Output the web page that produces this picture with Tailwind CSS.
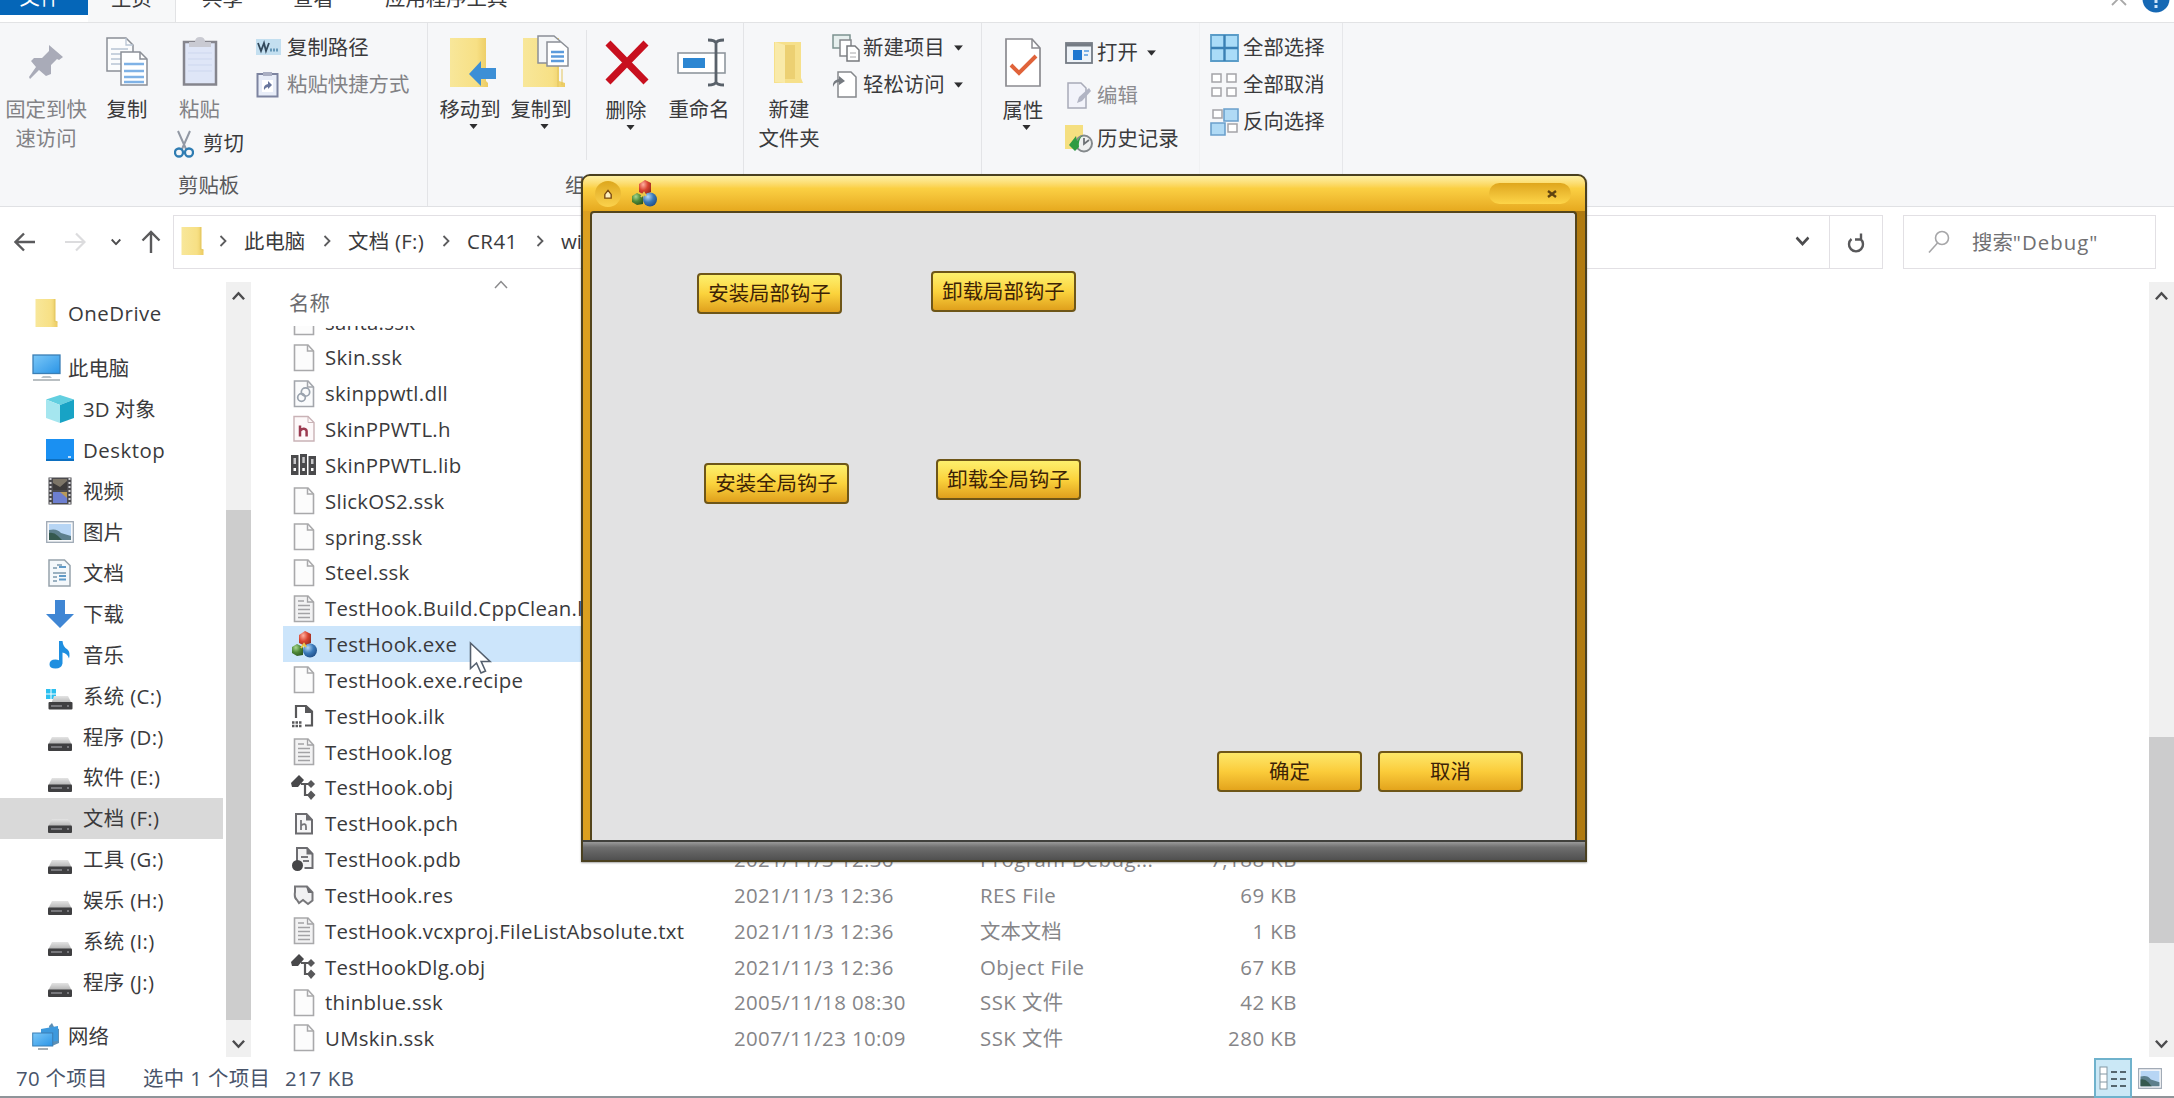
<!DOCTYPE html>
<html lang="zh-CN">
<head>
<meta charset="utf-8">
<title>Debug</title>
<script src="https://cdn.jsdelivr.net/npm/@tailwindcss/browser@4"></script>
</head>
<body class="relative flex h-[1098px] w-[2174px] flex-col overflow-hidden bg-white font-['Open_Sans','Noto_Sans_CJK_SC',sans-serif] text-[20.4px] text-[#3a3a3c]">

<!-- shared symbols -->
<svg class="absolute h-0 w-0">
  <defs>
    <radialGradient id="red" cx=".35" cy=".3" r=".8"><stop offset="0" stop-color="#ffb0a0"/><stop offset=".5" stop-color="#d8432f"/><stop offset="1" stop-color="#8c2a20"/></radialGradient>
    <radialGradient id="grn" cx=".35" cy=".3" r=".8"><stop offset="0" stop-color="#a8d890"/><stop offset=".5" stop-color="#4f8a38"/><stop offset="1" stop-color="#2c5520"/></radialGradient>
    <radialGradient id="blu" cx=".35" cy=".3" r=".8"><stop offset="0" stop-color="#b4d8f8"/><stop offset=".5" stop-color="#3a78b8"/><stop offset="1" stop-color="#1d4880"/></radialGradient>
    <linearGradient id="fold" x1="0" x2="1"><stop offset="0" stop-color="#f8e79a"/><stop offset=".7" stop-color="#f7e085"/><stop offset="1" stop-color="#eccb62"/></linearGradient>
    <linearGradient id="scr" x1="0" y1="0" x2="1" y2="1"><stop offset="0" stop-color="#7cc8f8"/><stop offset="1" stop-color="#2a94e6"/></linearGradient>
    <linearGradient id="drv" x1="0" y1="0" x2="0" y2="1"><stop offset="0" stop-color="#e4e4e4"/><stop offset="1" stop-color="#b4b4b4"/></linearGradient>
  </defs>
  <symbol id="mfc" viewBox="0 0 26 27"><path d="M1 16l5-3 6 3v8l-6 1-5-3z" fill="url(#grn)"/><path d="M8 4l6-4 6 3v9l-6 3-6-3z" fill="url(#red)"/><circle cx="19" cy="19.500" r="7" fill="url(#blu)"/><path d="M10 17l3-4 2 3" stroke="#e8c84c" stroke-width="2" fill="none"/></symbol>
  <symbol id="page" viewBox="0 0 22 28"><path d="M1.500 1h13.500l5.500 6v19.500h-19z" fill="#fcfcfc" stroke="#a9a9ab" stroke-width="1.600"/><path d="M14.500 1v6h6" fill="none" stroke="#a9a9ab" stroke-width="1.500"/></symbol>
  <symbol id="txt" viewBox="0 0 22 28"><path d="M1.500 1h13.500l5.500 6v19.500h-19z" fill="#f2f2f3" stroke="#a9a9ab" stroke-width="1.600"/><path d="M14.500 1v6h6M5 6h6M5 10.500h12M5 14.500h12M5 18.500h12M5 22.500h12" fill="none" stroke="#a2a2a5" stroke-width="1.300"/></symbol>
  <symbol id="dll" viewBox="0 0 22 28"><path d="M1.500 1h13.500l5.500 6v19.500h-19z" fill="#fafbfc" stroke="#a3a6ac" stroke-width="1.600"/><path d="M14.500 1v6h6" fill="none" stroke="#a3a6ac" stroke-width="1.500"/><circle cx="12.500" cy="12" r="4.200" fill="none" stroke="#9aa3ae" stroke-width="1.700"/><circle cx="8.500" cy="17.500" r="3.800" fill="none" stroke="#9aa3ae" stroke-width="1.700"/></symbol>
  <symbol id="h" viewBox="0 0 24 28"><path d="M2 1.500h14l6 6v18.500h-20z" fill="#fdf8f9" stroke="#c9b2b6" stroke-width="1.400"/><path d="M16 1.500v6h6" fill="none" stroke="#c9b2b6"/><path d="M8 10.500v11M8 16q1.500-2.500 4-2.200t2.600 2.500v5.200" fill="none" stroke="#9c3a50" stroke-width="2.500"/></symbol>
  <symbol id="lib" viewBox="0 0 26 22"><path d="M0 1h7.500v20h-7.500zM9 0h7v21h-7zM17.500 2h7.500v19h-7.500z" fill="#4a4a4c"/><path d="M2.500 4h2.500v6h-2.500zM11.300 3h2.500v6h-2.500zM20 5h2.500v5h-2.500z" fill="#c8c8ca"/><path d="M2.500 14h2.500v3h-2.500zM11.300 14h2.500v3h-2.500zM20 14h2.500v3h-2.500z" fill="#fff"/></symbol>
  <symbol id="ilk" viewBox="0 0 24 24"><path d="M4 14v-12h10l6 5.500v14h-7" fill="none" stroke="#58585a" stroke-width="2.200"/><path d="M13 1l8 8h-8z" fill="#58585a"/><path d="M0 18.500h10M0 22h10" stroke="#58585a" stroke-width="2.500" stroke-dasharray="2.500 1"/></symbol>
  <symbol id="obj" viewBox="0 0 26 26"><path d="M0 8l8-8 5 5-6 7h-6z" fill="#48484a"/><path d="M10 9h8M14 9v11h5" fill="none" stroke="#58585a" stroke-width="2.200"/><path d="M16 9l4-4 4 4-4 4zM16 20l4-4.500 4.500 4.500-4.500 5z" fill="#58585a"/></symbol>
  <symbol id="pch" viewBox="0 0 20 24"><path d="M2 2h10.500l5.500 6v13.500h-16z" fill="#f6f6f7" stroke="#6c6c70" stroke-width="2"/><path d="M12 2v6.500h6z" fill="#6c6c70"/><path d="M7 8v10M7 13.500q5-3 5 1v3.500" stroke="#77777b" stroke-width="1.800" fill="none"/></symbol>
  <symbol id="pdb" viewBox="0 0 24 26"><path d="M5 16v-14h10l5.500 6v14h-8" fill="#f2f2f3" stroke="#6c6c70" stroke-width="2"/><path d="M14.500 2v6.500h6z" fill="#6c6c70"/><path d="M9 11h7M11 15h6" stroke="#77777b" stroke-width="2"/><circle cx="5.500" cy="19.500" r="5.500" fill="#454547"/></symbol>
  <symbol id="res" viewBox="0 0 22 22"><path d="M4 16q-3-2-2-8v-5.500h12l5.500 6v8l-4.500 3.500-5-4-4 3z" fill="#f1f1f2" stroke="#77777a" stroke-width="2"/><path d="M13 2l7 7h-5z" fill="#6c6c70"/></symbol>
  <symbol id="folder" viewBox="0 0 22 30"><path d="M0 1h20v22l2 1v5h-22z" fill="url(#fold)"/><path d="M19 1v22l3 1" fill="none" stroke="#e6cb67" stroke-width="1.300"/></symbol>
  <symbol id="pc" viewBox="0 0 29 28"><rect x="1" y="1" width="27" height="18.500" fill="url(#scr)" stroke="#3b7fb5" stroke-width="1.300"/><path d="M11 22h7l2 2h-11z" fill="#b8c2c8"/><path d="M1 26h27" stroke="#b2b8bc" stroke-width="1.800"/></symbol>
  <symbol id="cube" viewBox="0 0 28 28"><path d="M14 0l14 4.500-14 5.500-14-5.500z" fill="#62cfe0"/><path d="M0 4.500l14 5.500v18l-14-5z" fill="#a5e6ef"/><path d="M28 4.500l-14 5.500v18l14-5z" fill="#18a3c5"/></symbol>
  <symbol id="desk" viewBox="0 0 28 28"><rect y="3" width="28" height="22" fill="#1a90f2"/><path d="M0 24h28" stroke="#0c6fc0" stroke-width="2"/><path d="M22 21h3" stroke="#bfe1ff" stroke-width="2"/></symbol>
  <symbol id="film" viewBox="0 0 24 28"><rect x=".5" y=".5" width="23" height="27" fill="#4b4a4e"/><rect x="5" y="2" width="14" height="11" fill="#7c7568"/><rect x="5" y="15" width="14" height="11" fill="#6d7fd0"/><path d="M5 6l7 4 7-6v9h-14z" fill="#3c3a3a"/><path d="M12 15h7v6z" fill="#b89a5a"/><path d="M2.500 1v26M21.500 1v26" stroke="#d0d0d4" stroke-width="2" stroke-dasharray="2 2"/></symbol>
  <symbol id="pic" viewBox="0 0 28 22"><rect x=".7" y=".7" width="26.600" height="20.600" fill="#f8f9fb" stroke="#9ea8b4" stroke-width="1.300"/><rect x="3" y="3" width="22" height="16" fill="#b7d5f4"/><path d="M3 9q8-2 12 3l10 3v4h-22z" fill="#5d7f8c"/><path d="M3 12q5-1 9 3l4 4h-13z" fill="#35594e"/></symbol>
  <symbol id="docu" viewBox="0 0 23 28"><path d="M1 1h15.500l5.500 5.500v20.500h-21z" fill="#f4f8fb" stroke="#96a2ac" stroke-width="1.500"/><path d="M9 6h5M5 9h4M5 14h13M5 18h4M5 22h4" stroke="#7b98ad" stroke-width="1.600"/><path d="M11 8h7M11 17h7M11 20.500h7" stroke="#5f9ac8" stroke-width="2"/></symbol>
  <symbol id="down" viewBox="0 0 28 28"><path d="M9 0h10v14h9l-14 14-14-14h9z" fill="#3f86d4"/></symbol>
  <symbol id="note" viewBox="0 0 22 28"><path d="M10 0h3.500q.5 6 5 8.500 3 2.500 1.500 9-1.500-5-6.500-6v11q-1 5-7 5-6 0-6-4.300 0-4.700 6-4.700 2 0 3.500.8z" fill="#1f8fe0"/></symbol>
  <symbol id="drive" viewBox="0 0 24 14"><path d="M4 0h16l3.500 7h-23z" fill="url(#drv)"/><rect x="0" y="6.500" width="24" height="7.500" rx="1" fill="#3f3f41"/><path d="M3 10h11M19 10h2" stroke="#8b8b8e" stroke-width="1.500"/></symbol>
  <symbol id="sys" viewBox="0 0 28 22"><path d="M0 1h4.500v4.500h-4.500zM5.500 1h4.500v4.500h-4.500zM0 6.500h4.500v4.500h-4.500zM5.500 6.500h4.500v4.500h-4.500z" fill="#2cc0f0"/><path d="M8 8h14l3.500 7h-20z" fill="url(#drv)"/><rect x="2.500" y="14" width="24" height="7.500" rx="1" fill="#3f3f41"/><path d="M5 18h11M21 18h2" stroke="#8b8b8e" stroke-width="1.500"/></symbol>
  <symbol id="net" viewBox="0 0 28 27"><path d="M17 3l3-3 2 4 5 2v14l-7 3z" fill="#5d8fb4"/><path d="M9 6l17-3v15l-17 2z" fill="#3d99dd"/><rect x=".7" y="10" width="20" height="13" fill="url(#scr)" stroke="#3b7fb5"/><path d="M6 26h10" stroke="#a5adb3" stroke-width="2"/></symbol>
  <symbol id="caret" viewBox="0 0 10 6"><path d="M0 0h10l-5 6z" fill="#2e2e30"/></symbol>
  <symbol id="gt" viewBox="0 0 8 12"><path d="M1.500 1l5 5-5 5" fill="none" stroke="#5c5c5e" stroke-width="1.800"/></symbol>
  <symbol id="vee" viewBox="0 0 14 10"><path d="M1 1.500l6 6.500 6-6.500" fill="none" stroke="#4c4c4e" stroke-width="2.600"/></symbol>
</svg>

<!-- tabs -->
<header class="flex h-[23px] shrink-0 items-start overflow-hidden border-b border-[#e2e3e5] bg-white leading-[30px]">
  <div class="flex h-[15px] w-[88px] justify-center bg-[#0566b8] text-white"><span class="-mt-[18px] ml-[-8px]">文件</span></div>
  <div class="flex h-[23px] w-[88px] justify-center border-r border-[#e2e3e5] bg-[#f7f8f9]"><span class="-mt-[17px]">主页</span></div>
  <span class="-mt-[17px] ml-[26px] w-[91px]">共享</span>
  <span class="-mt-[17px] w-[92px]">查看</span>
  <span class="-mt-[17px] grow">应用程序工具</span>
  <svg class="mr-[15px] h-[6px] w-[16px]" viewBox="0 0 16 6"><path d="M1 5l7-7 7 7" fill="none" stroke="#a8a8a8" stroke-width="1.800"/></svg>
  <svg class="mr-[4px] h-[14px] w-[28px]" viewBox="0 0 28 14"><circle cx="14" cy="-1" r="13.500" fill="#1668b4"/><path d="M14 0v3M14 5v3" stroke="#cfe5fa" stroke-width="3"/></svg>
</header>

<!-- ribbon -->
<section class="flex h-[184px] shrink-0 border-b border-[#e0e1e4] bg-[#f6f7f9]">
  <!-- clipboard -->
  <div class="flex w-[427px] flex-col">
    <div class="flex h-[148px]">
      <div class="flex w-[92px] flex-col items-center pt-[14px] leading-[29px] text-[#828286]">
        <svg class="h-[50px] w-[36px]" viewBox="0 0 36 50"><path d="M21 8l14 12-4 3-2-1-6 6v9l-5 2-7-6-9 9-1-2 7-10-5-6 3-3h8l7-7z" fill="#a9abb8"/></svg>
        <span class="mt-[8px]">固定到快</span><span>速访问</span>
      </div>
      <div class="flex w-[70px] flex-col items-center pt-[14px] leading-[29px]">
        <svg class="h-[50px] w-[42px]" viewBox="0 0 42 50"><path d="M1 1h19l7 7v26h-26z" fill="#fbfcfd" stroke="#8b8f96" stroke-width="1.500"/><path d="M20 1v7h7M5 12h17M5 17h17M5 22h17M5 27h10" fill="none" stroke="#b8c4d4" stroke-width="1.300"/><path d="M15 15h19l7 7v26h-26z" fill="#fff" stroke="#8b8f96" stroke-width="1.500"/><path d="M34 15v7h7" fill="none" stroke="#8b8f96" stroke-width="1.500"/><path d="M18 27h20M18 34h20M18 40h20M18 45h20" stroke="#7fb2e6" stroke-width="2.600"/></svg>
        <span class="mt-[8px]">复制</span>
      </div>
      <div class="flex w-[94px] flex-col pt-[14px] leading-[29px]">
        <svg class="ml-[20px] h-[50px] w-[36px]" viewBox="0 0 36 50"><rect x="2" y="5" width="32" height="42.500" fill="#dfe6f7" stroke="#85858d" stroke-width="2.500"/><path d="M7 5h22v5h-22z" fill="#c9cad2"/><path d="M13 5q0-5 5-5t5 5" fill="#c9cad2"/><path d="M6 16h24M6 22h24M6 28h24M6 34h24" stroke="#cdd7ee"/></svg>
        <span class="mt-[8px] ml-[17px] text-[#828286]">粘贴</span>
        <div class="mt-[5px] ml-[12px] flex items-center gap-[9px]">
          <svg class="h-[28px] w-[20px]" viewBox="0 0 20 28"><path d="M4 1l8 18M16 1l-8 18" stroke="#9298a4" stroke-width="2"/><circle cx="5" cy="22.500" r="4" fill="none" stroke="#2f7cb2" stroke-width="2.300"/><circle cx="15" cy="22.500" r="4" fill="none" stroke="#2f7cb2" stroke-width="2.300"/></svg>
          <span>剪切</span>
        </div>
      </div>
      <div class="flex flex-col pt-[6px]">
        <div class="flex h-[37px] items-center">
          <svg class="mr-[6px] h-[17px] w-[25px]" viewBox="0 0 25 17"><rect width="25" height="16" fill="#c3dff0"/><path d="M2 4l3 8 3-8 2 8 3-8" fill="none" stroke="#33495c" stroke-width="1.800"/><path d="M14 11h9" stroke="#6698b8" stroke-width="3" stroke-dasharray="2 1"/></svg>复制路径
        </div>
        <div class="flex h-[37px] items-center text-[#828286]">
          <svg class="mr-[8px] h-[27px] w-[23px]" viewBox="0 0 23 27"><rect x="1.500" y="3" width="20" height="22.500" fill="#e8edf8" stroke="#7d84a0" stroke-width="2"/><path d="M7 1h9v4h-9z" fill="#a9aec2"/><rect x="6" y="9" width="11" height="12" fill="#fff"/><path d="M8 19q-1-5 4-6v-3l4 4-4 4v-2q-2 0-4 3z" fill="#67759c"/></svg>粘贴快捷方式
        </div>
      </div>
    </div>
    <span class="ml-[178px] leading-[29px] text-[#5a5a5c]">剪贴板</span>
  </div>
  <!-- organize -->
  <div class="flex w-[316px] flex-col border-l border-[#e3e4e7]">
    <div class="flex h-[148px]">
      <div class="ml-[6px] flex w-[72px] flex-col items-center pt-[14px] leading-[29px]">
        <svg class="ml-[6px] h-[50px] w-[46px]" viewBox="0 0 46 50"><path d="M0 1h36v43l2 2v4h-38z" fill="url(#fold)"/><path d="M19 37l12-13v7h15v11h-15v7z" fill="#3c8fd6"/></svg>
        <span class="mt-[8px]">移动到</span>
        <svg class="ml-[7px] h-[5px] w-[9px]" viewBox="0 0 10 6"><use href="#caret"/></svg>
      </div>
      <div class="flex w-[70px] flex-col items-center pt-[14px] leading-[29px]">
        <svg class="ml-[10px] h-[50px] w-[46px] overflow-visible" viewBox="0 0 46 50"><path d="M0 1h36v43l6 2v4h-42z" fill="url(#fold)"/><path d="M35 20v30M39 32v16" stroke="#e3c55c"/><path d="M15-1h16l6 5v22h-22z" fill="#f4f6f8" stroke="#8b8f96" stroke-width="1.500"/><path d="M24 5h14l7 6v18h-21z" fill="#fff" stroke="#8b8f96" stroke-width="1.500"/><path d="M28 15h13M28 19.500h13M28 24h13" stroke="#5b9bdc" stroke-width="2.300"/></svg>
        <span class="mt-[8px]">复制到</span>
        <svg class="ml-[6px] h-[5px] w-[9px]" viewBox="0 0 10 6"><use href="#caret"/></svg>
      </div>
      <div class="mt-[7px] ml-[10px] h-[130px] w-px bg-[#e3e4e7]"></div>
      <div class="ml-[4px] flex w-[70px] flex-col items-center pt-[15px] leading-[29px]">
        <svg class="ml-[2px] h-[50px] w-[44px]" viewBox="0 0 44 50"><path d="M3 5l38 39M41 5l-38 39" stroke="#c8101f" stroke-width="7"/></svg>
        <span class="mt-[8px]">删除</span>
        <svg class="ml-[8px] h-[5px] w-[9px]" viewBox="0 0 10 6"><use href="#caret"/></svg>
      </div>
      <div class="ml-[2px] flex w-[72px] flex-col items-center pt-[14px] leading-[29px]">
        <svg class="ml-[5px] h-[50px] w-[50px]" viewBox="0 0 50 50"><rect x="1" y="16" width="47" height="20" fill="#fff" stroke="#8f969e" stroke-width="1.600"/><rect x="6" y="21" width="22" height="10" fill="#2c86d2"/><path d="M31 3q7 0 8 3 1-3 8-3M39 5v40M31 48q7 0 8-3 1 3 8 3" fill="none" stroke="#59616a" stroke-width="2.800"/></svg>
        <span class="mt-[8px]">重命名</span>
      </div>
    </div>
    <span class="ml-[137px] leading-[29px] text-[#5a5a5c]">组织</span>
  </div>
  <!-- new -->
  <div class="flex w-[238px] border-l border-[#e3e4e7]">
    <div class="ml-[9px] flex w-[72px] flex-col items-center pt-[14px] leading-[29px]">
      <svg class="ml-[-2px] h-[50px] w-[30px]" viewBox="0 0 30 50"><path d="M1 5h27v36l2 5h-29z" fill="#f6e08b"/><path d="M2 5l10 3v38l-10-1z" fill="#f9eaa9"/><path d="M12 8h10v34h-10z" fill="#ecd072"/></svg>
      <span class="mt-[8px]">新建</span><span>文件夹</span>
    </div>
    <div class="ml-[7px] flex flex-col pt-[6px]">
      <div class="flex h-[37px] items-center">
        <svg class="mr-[3px] h-[28px] w-[28px]" viewBox="0 0 28 28"><path d="M1 1h17v13h-17z" fill="#e6efee" stroke="#7c9390" stroke-width="1.500"/><path d="M8 6h11v16h-11z" fill="#fff" stroke="#85888c" stroke-width="1.500"/><path d="M15 12h8l4 4v11h-12z" fill="#fff" stroke="#77797d" stroke-width="1.500"/><path d="M18 19h6M18 23h6" stroke="#a8a8aa"/></svg>新建项目<svg class="ml-[9px] h-[6px] w-[9px]" viewBox="0 0 10 6"><use href="#caret"/></svg>
      </div>
      <div class="flex h-[37px] items-center">
        <svg class="mr-[3px] h-[28px] w-[28px]" viewBox="0 0 28 28"><path d="M6 1h13l5 5v20h-18z" fill="#fff" stroke="#85888c" stroke-width="1.500"/><path d="M1 16q-1-7 6-8v-3l6 5-6 4v-3q-4 0-6 5z" fill="#757a80"/></svg>轻松访问<svg class="ml-[9px] h-[6px] w-[9px]" viewBox="0 0 10 6"><use href="#caret"/></svg>
      </div>
    </div>
  </div>
  <!-- open -->
  <div class="flex w-[218px] border-l border-[#e3e4e7]">
    <div class="ml-[5px] flex w-[72px] flex-col items-center pt-[15px] leading-[29px]">
      <svg class="h-[50px] w-[36px]" viewBox="0 0 36 50"><path d="M1 1h26l8 9v38h-34z" fill="#fff" stroke="#8b8b90" stroke-width="1.700"/><path d="M27 1v9h8" fill="none" stroke="#8b8b90" stroke-width="1.500"/><path d="M6 27l8 8 17-17" fill="none" stroke="#e0633a" stroke-width="4"/></svg>
      <span class="mt-[8px]">属性</span>
      <svg class="ml-[6px] h-[5px] w-[9px]" viewBox="0 0 10 6"><use href="#caret"/></svg>
    </div>
    <div class="ml-[6px] flex flex-col pt-[8px]">
      <div class="flex h-[43px] items-center">
        <svg class="mr-[4px] h-[22px] w-[28px]" viewBox="0 0 28 22"><rect x="1" y="1" width="26" height="20" fill="#eef3f8" stroke="#747b84" stroke-width="1.800"/><path d="M1 3h26" stroke="#747b84" stroke-width="3"/><rect x="8" y="8" width="9" height="10" fill="#1f77d0"/><path d="M19 9h5M19 13h4" stroke="#7ab0e6" stroke-width="2"/></svg>打开<svg class="ml-[9px] h-[6px] w-[9px]" viewBox="0 0 10 6"><use href="#caret"/></svg>
      </div>
      <div class="flex h-[43px] items-center text-[#8c8c90]">
        <svg class="mr-[4px] h-[28px] w-[28px]" viewBox="0 0 28 28"><path d="M3 1h13l5 5v20h-18z" fill="#f2f3fa" stroke="#a8abb8" stroke-width="1.500"/><path d="M12 21l2-6 10-9 2 3-9 10z" fill="#b1b4c3"/></svg>编辑
      </div>
      <div class="flex h-[43px] items-center">
        <svg class="mr-[4px] h-[30px] w-[28px]" viewBox="0 0 28 30"><path d="M0 1h18v24h-18z" fill="#f5df80"/><circle cx="19" cy="19.500" r="8" fill="#eef0f0" stroke="#84898c" stroke-width="2"/><path d="M19 14v6l5-4" fill="none" stroke="#6c7174" stroke-width="1.800"/><path d="M4 21l7-9 1 5q3-4 6-6-5 5-4 12l-4 4z" fill="#2f9c42"/></svg>历史记录
      </div>
    </div>
  </div>
  <!-- select -->
  <div class="flex w-[144px] flex-col border-r border-l border-[#e6e7ea] border-l-[#f0f1f3] pt-[6px] pl-[10px]">
    <div class="flex h-[37px] items-center">
      <svg class="mr-[4px] h-[28px] w-[29px]" viewBox="0 0 29 28"><path d="M1 1h27v26h-27z" fill="#aadcf8" stroke="#5a9cc8" stroke-width="1.800"/><path d="M14.500 1v26M1 14h27" stroke="#3a80b4" stroke-width="2.400"/></svg>全部选择
    </div>
    <div class="flex h-[37px] items-center">
      <svg class="mr-[4px] h-[28px] w-[29px]" viewBox="0 0 29 28"><path d="M2 3h9v8h-9zM17 3h9v8h-9zM2 17h9v8h-9zM17 17h9v8h-9z" fill="#fff" stroke="#a4a4a8" stroke-width="1.500"/></svg>全部取消
    </div>
    <div class="flex h-[37px] items-center">
      <svg class="mr-[4px] h-[28px] w-[29px]" viewBox="0 0 29 28"><path d="M3 2h9v8h-9zM18 16h9v8h-9z" fill="#fff" stroke="#a4a4a8" stroke-width="1.500"/><path d="M14 1h14v12h-14zM1 15h14v12h-14z" fill="#b0daf5" stroke="#6ba0cc" stroke-width="1.600"/></svg>反向选择
    </div>
  </div>
</section>

<!-- address bar -->
<nav class="flex h-[63px] shrink-0 items-start pt-[8px]">
  <div class="flex h-[54px] w-[173px] items-center">
    <svg class="ml-[14px] h-[22px] w-[22px]" viewBox="0 0 22 22"><path d="M21 11h-19M10 2.500l-8.500 8.500 8.500 8.500" fill="none" stroke="#5a5a5c" stroke-width="2.400"/></svg>
    <svg class="ml-[28px] h-[22px] w-[22px]" viewBox="0 0 22 22"><path d="M1 11h19M12 2.500l8.500 8.500-8.500 8.500" fill="none" stroke="#dcdcde" stroke-width="2.200"/></svg>
    <svg class="ml-[25px] h-[8px] w-[10px]" viewBox="0 0 14 10"><use href="#vee"/></svg>
    <svg class="ml-[20px] h-[24px] w-[20px]" viewBox="0 0 20 24"><path d="M10 23v-21M1.500 10.500l8.500-8.500 8.500 8.500" fill="none" stroke="#5a5a5c" stroke-width="2.400"/></svg>
  </div>
  <div class="flex h-[54px] w-[1710px] items-center border border-[#e2e0e4] pb-[2px]">
    <svg class="ml-[7px] h-[30px] w-[23px]"><use href="#folder"/></svg>
    <svg class="ml-[15px] h-[12px] w-[8px]"><use href="#gt"/></svg>
    <span class="ml-[17px] w-[79px]">此电脑</span>
    <svg class="h-[12px] w-[8px]"><use href="#gt"/></svg>
    <span class="ml-[17px] w-[94px] whitespace-nowrap tracking-[0.3px]">文档 (F:)</span>
    <svg class="h-[12px] w-[8px]"><use href="#gt"/></svg>
    <span class="ml-[17px] w-[69px] tracking-[0.5px]">CR41</span>
    <svg class="h-[12px] w-[8px]"><use href="#gt"/></svg>
    <span class="ml-[17px] grow">win32</span>
    <svg class="mr-[19px] h-[10px] w-[15px]" viewBox="0 0 14 10"><use href="#vee"/></svg>
    <div class="-mb-[2px] flex h-[52px] w-[53px] items-center justify-center border-l border-[#e2e0e4]">
      <svg class="h-[22px] w-[18px]" viewBox="0 0 18 22"><path d="M13.500 7a7 7 0 1 1-9 0M4 1.500v6h6" fill="none" stroke="#58585a" stroke-width="2.400" transform="matrix(-1 0 0 1 18 1)"/></svg>
    </div>
  </div>
  <div class="ml-[20px] flex h-[54px] w-[253px] items-center border border-[#e2e0e4] text-[#707072]">
    <svg class="ml-[24px] h-[24px] w-[22px]" viewBox="0 0 22 24"><circle cx="14" cy="8" r="6.500" fill="none" stroke="#a6a6a8" stroke-width="1.600"/><path d="M9.500 13l-8.500 9.500" stroke="#a6a6a8" stroke-width="1.600"/></svg>
    <span class="ml-[22px]">搜索<span class="tracking-[1px]">"Debug"</span></span>
  </div>
</nav>

<!-- panes -->
<main class="flex h-[790px] shrink-0">
  <aside class="flex h-full w-[226px] flex-col pt-[23px]" id="tree"></aside>
  <div class="mt-[12px] flex h-[775px] w-[25px] flex-col items-center bg-[#f0f0f0] pt-[9px] pb-[7px]">
    <svg class="h-[10px] w-[13px] shrink-0 rotate-180" viewBox="0 0 14 10"><use href="#vee"/></svg>
    <div class="mt-[209px] h-[510px] w-full shrink-0 bg-[#cdcdcd]"></div>
    <svg class="mt-[19px] h-[10px] w-[13px] shrink-0" viewBox="0 0 14 10"><use href="#vee"/></svg>
  </div>
  <section class="ml-[32px] flex grow flex-col">
    <div class="flex h-[56px] shrink-0 text-[#6c6c70]">
      <span class="mt-[18px] ml-[6px] w-[205px] leading-[30px]">名称</span>
      <svg class="mt-[10px] h-[9px] w-[14px]" viewBox="0 0 14 9"><path d="M1 8l6-6.500 6 6.500" fill="none" stroke="#8a8a8c" stroke-width="1.500"/></svg>
    </div>
    <div class="h-[734px] overflow-hidden"><div class="-mt-[22px]" id="files"></div></div>
  </section>
  <div class="mt-[12px] flex h-[775px] w-[25px] flex-col items-center bg-[#f0f0f0] pt-[9px]">
    <svg class="h-[10px] w-[13px] shrink-0 rotate-180" viewBox="0 0 14 10"><use href="#vee"/></svg>
    <div class="mt-[436px] h-[206px] w-full shrink-0 bg-[#cccccd]"></div>
    <svg class="mt-[96px] h-[10px] w-[13px] shrink-0" viewBox="0 0 14 10"><use href="#vee"/></svg>
  </div>
</main>

<!-- status bar -->
<footer class="flex h-[38px] shrink-0 items-center border-b-2 border-[#8f9499] text-[#48546a]">
  <span class="ml-[16px] w-[127px] tracking-[0.3px]">70 个项目</span>
  <span class="w-[142px] tracking-[0.4px]">选中 1 个项目</span>
  <span class="grow tracking-[0.6px]">217 KB</span>
  <div class="-mt-[2px] -mb-[2px] flex h-[40px] w-[38px] items-center justify-center border-2 border-[#6fb2cc] bg-[#cbe8f6]">
    <svg class="h-[24px] w-[28px]" viewBox="0 0 28 24"><rect x="1" y="1" width="7" height="22" fill="#fff" stroke="#8498a4"/><path d="M1 8h7M1 16h7" stroke="#8498a4"/><path d="M12 6h6M21 6h6M12 13h6M21 13h6M12 20h6M21 20h6" stroke="#55666e" stroke-width="1.800"/></svg>
  </div>
  <svg class="mr-[12px] ml-[6px] h-[21px] w-[24px]" viewBox="0 0 28 22" preserveAspectRatio="none"><use href="#pic"/></svg>
</footer>

<!-- dialog window -->
<div class="absolute top-[174px] left-[581px] flex h-[688px] w-[1006px] flex-col overflow-hidden rounded-t-[9px] border-2 border-[#4a4020] bg-linear-to-r from-[#dca020] to-[#b07a10] text-[#3c2206] shadow-[0_1px_2px_rgba(0,0,0,0.35)]">
  <div class="flex h-[35px] shrink-0 items-center bg-linear-to-b from-[#fdf0a4] via-[#fbd043] via-35% to-[#e6a91e]">
    <div class="ml-[12px] flex size-[26px] items-center justify-center rounded-full bg-linear-to-b from-[#dda71c] to-[#fbd24c]">
      <svg class="size-[10px]" viewBox="0 0 11 11"><path d="M2 10v-4l3.500-4.500 3.500 4.500v4z" fill="#fdf0c0" stroke="#7a4a10" stroke-width="1.500"/></svg>
    </div>
    <svg class="ml-[10px] h-[27px] w-[26px]"><use href="#mfc"/></svg>
    <div class="mr-[14px] ml-auto flex h-[21px] w-[82px] items-center justify-end rounded-full bg-linear-to-b from-[#dfa61c] to-[#fdd548] pr-[14px]">
      <svg class="h-[8px] w-[10px]" viewBox="0 0 10 8"><path d="M1 1l8 6M9 1l-8 6" stroke="#5f4310" stroke-width="2.400"/></svg>
    </div>
  </div>
  <div class="mr-[8px] ml-[7px] flex grow flex-col rounded-t-[4px] border-x-2 border-t-2 border-[#54451c] bg-[#e2e2e3]">
    <div class="flex items-start pl-[105px]">
      <button class="mt-[60px] h-[41px] w-[145px] rounded-[4px] border-2 border-[#6e5618] bg-linear-to-b from-[#fdf06c] via-[#fbd33c] to-[#dfa01c]">安装局部钩子</button>
      <button class="mt-[58px] ml-[89px] h-[41px] w-[145px] rounded-[4px] border-2 border-[#6e5618] bg-linear-to-b from-[#fdf06c] via-[#fbd33c] to-[#dfa01c]">卸载局部钩子</button>
    </div>
    <div class="mt-[145px] flex items-start pl-[112px]">
      <button class="mt-[4px] h-[41px] w-[145px] rounded-[4px] border-2 border-[#6e5618] bg-linear-to-b from-[#fdf06c] via-[#fbd33c] to-[#dfa01c]">安装全局钩子</button>
      <button class="ml-[87px] h-[41px] w-[145px] rounded-[4px] border-2 border-[#6e5618] bg-linear-to-b from-[#fdf06c] via-[#fbd33c] to-[#dfa01c]">卸载全局钩子</button>
    </div>
    <div class="mt-auto mb-[48px] flex justify-end gap-[16px] pr-[52px]">
      <button class="h-[41px] w-[145px] rounded-[4px] border-2 border-[#6e5618] bg-linear-to-b from-[#fde868] via-[#fbcc3a] to-[#e3a41c]">确定</button>
      <button class="h-[41px] w-[145px] rounded-[4px] border-2 border-[#6e5618] bg-linear-to-b from-[#fde868] via-[#fbcc3a] to-[#e3a41c]">取消</button>
    </div>
  </div>
  <div class="h-[20px] shrink-0 border-t-2 border-[#40403c] bg-linear-to-b from-[#9a9a9a] via-[#6e6e6e] via-30% to-[#505050]"></div>
</div>

<!-- pointer -->
<svg class="absolute top-[641px] left-[469px] h-[34px] w-[23px]" viewBox="0 0 23 34"><path d="M1.500 2v25.500l6-5.500 4.500 10 4.500-2-4.300-9.500h8.800z" fill="#fff" stroke="#55606e" stroke-width="1.600"/></svg>

<script>
const tree = [
  ['folder', 'OneDrive', 0, 23, 30], ['pc', '此电脑', 0, 29, 28],
  ['cube', '3D 对象', 1, 28, 28], ['desk', 'Desktop', 1, 28, 28], ['film', '视频', 1, 24, 28],
  ['pic', '图片', 1, 28, 22], ['docu', '文档', 1, 23, 28], ['down', '下载', 1, 28, 28], ['note', '音乐', 1, 22, 28],
  ['sys', '系统 (C:)', 1, 28, 22], ['drive', '程序 (D:)', 1, 24, 14], ['drive', '软件 (E:)', 1, 24, 14],
  ['drive', '文档 (F:)', 1, 24, 14, 1], ['drive', '工具 (G:)', 1, 24, 14], ['drive', '娱乐 (H:)', 1, 24, 14],
  ['drive', '系统 (I:)', 1, 24, 14], ['drive', '程序 (J:)', 1, 24, 14], ['net', '网络', 0, 28, 27]
];
document.getElementById('tree').innerHTML = tree.map(([icon, label, depth, w, h, current], i) => {
  const gap = i === 1 ? 'mt-[14px]' : i === tree.length - 1 ? 'mt-[13px]' : '';
  const bg = current ? 'mr-[3px] bg-[#d9d9d9]' : '';
  const indent = depth ? 'ml-[43px]' : 'ml-[31px]';
  const box = depth ? 'w-[33px]' : 'w-[30px]';
  const drop = icon === 'drive' ? 'mt-[15px]' : icon === 'sys' ? 'mt-[7px]' : '';
  const tracking = /^[A-Z][a-z]/.test(label) ? 'tracking-[0.5px]' : label.includes(':') ? 'tracking-[0.35px]' : '';
  return `<div class="flex h-[40.95px] shrink-0 items-center ${gap} ${bg}">
    <span class="flex ${indent} ${box} justify-center ${drop}"><svg width="${w}" height="${h}"><use href="#${icon}"/></svg></span>
    <span class="ml-[7px] whitespace-nowrap ${tracking}">${label}</span></div>`;
}).join('');

const files = [
  ['page', 'santa.ssk'], ['page', 'Skin.ssk'], ['dll', 'skinppwtl.dll'], ['h', 'SkinPPWTL.h', 24, 28], ['lib', 'SkinPPWTL.lib', 26, 22],
  ['page', 'SlickOS2.ssk'], ['page', 'spring.ssk'], ['page', 'Steel.ssk'], ['txt', 'TestHook.Build.CppClean.log'],
  ['mfc', 'TestHook.exe', 26, 27], ['page', 'TestHook.exe.recipe'], ['ilk', 'TestHook.ilk', 24, 24], ['txt', 'TestHook.log'],
  ['obj', 'TestHook.obj', 26, 26], ['pch', 'TestHook.pch', 20, 24],
  ['pdb', 'TestHook.pdb', 24, 26, '2021/11/3 12:36', 'Program Debug...', '7,188 KB'],
  ['res', 'TestHook.res', 22, 22, '2021/11/3 12:36', 'RES File', '69 KB'],
  ['txt', 'TestHook.vcxproj.FileListAbsolute.txt', 22, 28, '2021/11/3 12:36', '文本文档', '1 KB'],
  ['obj', 'TestHookDlg.obj', 26, 26, '2021/11/3 12:36', 'Object File', '67 KB'],
  ['page', 'thinblue.ssk', 22, 28, '2005/11/18 08:30', 'SSK 文件', '42 KB'],
  ['page', 'UMskin.ssk', 22, 28, '2007/11/23 10:09', 'SSK 文件', '280 KB']
];
document.getElementById('files').innerHTML = files.map(([icon, name, w = 22, h = 28, date = '', type = '', size = '']) => `
  <div class="flex h-[35.83px] w-[1020px] items-center whitespace-nowrap text-[#858588] ${icon === 'mfc' ? 'bg-[#cce5fb]' : ''}">
    <span class="ml-[6px] flex w-[30px] justify-center"><svg width="${w}" height="${h}"><use href="#${icon}"/></svg></span>
    <span class="ml-[6px] w-[409px] tracking-[0.28px] text-[#3a3a3c]">${name}</span>
    <span class="w-[246px] tracking-[0.4px]">${date}</span>
    <span class="w-[200px] ${/[A-Z]/.test(type) ? 'tracking-[0.45px]' : ''}">${type}</span>
    <span class="w-[117px] text-right tracking-[0.5px]">${size}</span>
  </div>`).join('');
</script>
</body>
</html>
